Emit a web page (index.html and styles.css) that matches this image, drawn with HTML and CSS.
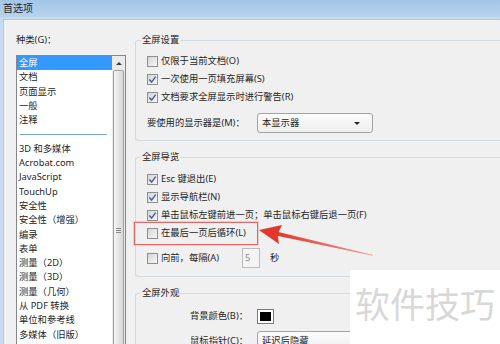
FILE: index.html
```html
<!DOCTYPE html>
<html lang="zh-CN">
<head>
  <meta charset="UTF-8">
  <title>首选项</title>
  <link rel="stylesheet" href="styles.css">
</head>
<body>
  <div class="window">
    <div class="titlebar">首选项</div>
    <div class="client">
      <div class="sidebar">
        <div class="sidebar-label">种类(G)：</div>
        <div class="listbox">
          <ul class="list">
            <li class="selected">全屏</li>
            <li>文档</li>
            <li>页面显示</li>
            <li>一般</li>
            <li>注释</li>
            <li class="sep"></li>
            <li>3D 和多媒体</li>
            <li>Acrobat.com</li>
            <li>JavaScript</li>
            <li>TouchUp</li>
            <li>安全性</li>
            <li>安全性（增强）</li>
            <li>编录</li>
            <li>表单</li>
            <li>测量（2D）</li>
            <li>测量（3D）</li>
            <li>测量（几何）</li>
            <li>从 PDF 转换</li>
            <li>单位和参考线</li>
            <li>多媒体（旧版）</li>
            <li>多媒体信任（旧版）</li>
          </ul>
          <div class="scrollbar">
            <div class="sb-up"><span class="tri"></span></div>
            <div class="thumb"><span class="grip"></span></div>
          </div>
        </div>
      </div>

      <div class="main">
        <fieldset class="group group-settings">
          <legend>全屏设置</legend>
          <div class="row"><span class="cb"></span>仅限于当前文档(O)</div>
          <div class="row"><span class="cb"><svg viewBox="0 0 9 9"><path d="M1.4 4.6 L3.6 7.1 L7.7 1.6"/></svg></span>一次使用一页填充屏幕(S)</div>
          <div class="row"><span class="cb"><svg viewBox="0 0 9 9"><path d="M1.4 4.6 L3.6 7.1 L7.7 1.6"/></svg></span>文档要求全屏显示时进行警告(R)</div>
          <div class="row row-field">
            <span class="field-label">要使用的显示器是(M)：</span>
            <div class="select">本显示器<span class="arrow"></span></div>
          </div>
        </fieldset>

        <fieldset class="group group-nav">
          <legend>全屏导览</legend>
          <div class="row"><span class="cb"><svg viewBox="0 0 9 9"><path d="M1.4 4.6 L3.6 7.1 L7.7 1.6"/></svg></span>Esc 键退出(E)</div>
          <div class="row"><span class="cb"><svg viewBox="0 0 9 9"><path d="M1.4 4.6 L3.6 7.1 L7.7 1.6"/></svg></span>显示导航栏(N)</div>
          <div class="row"><span class="cb"><svg viewBox="0 0 9 9"><path d="M1.4 4.6 L3.6 7.1 L7.7 1.6"/></svg></span>单击鼠标左键前进一页；单击鼠标右键后退一页(F)</div>
          <div class="row"><span class="cb"></span>在最后一页后循环(L)</div>
          <div class="row row-input">
            <span class="check-fixed"><span class="cb"></span>向前，每隔(A)</span>
            <span class="spin">5</span>
            <span class="unit">秒</span>
          </div>
        </fieldset>

        <fieldset class="group group-look">
          <legend>全屏外观</legend>
          <div class="row">
            <span class="field-label">背景颜色(B)：</span>
            <span class="swatch"><span></span></span>
          </div>
          <div class="row row-field">
            <span class="field-label">鼠标指针(C)：</span>
            <div class="select">延迟后隐藏<span class="arrow"></span></div>
          </div>
        </fieldset>
      </div>
    </div>

    <div class="highlight"></div>
    <svg class="pointer" viewBox="0 0 500 344">
      <defs>
        <linearGradient id="fade" x1="276" y1="234" x2="374" y2="255" gradientUnits="userSpaceOnUse">
          <stop offset="0" stop-color="#e3372c"/>
          <stop offset="1" stop-color="#e3372c" stop-opacity="0.45"/>
        </linearGradient>
      </defs>
      <polygon points="275.7,235.6 276.3,231.6 373.1,254.9 372.9,255.7" fill="url(#fade)"/>
      <polygon points="259,230 282,225 277.6,234.3 279,244" fill="#e3372c"/>
    </svg>
    <div class="watermark">软件技巧</div>
  </div>
</body>
</html>
```

FILE: styles.css
```css
* {
  box-sizing: border-box;
}
body {
  margin: 0;
  width: 500px;
  height: 344px;
  overflow: hidden;
  font-family: "Noto Sans", "Noto Sans CJK SC", sans-serif;
  font-size: 9.3px;
  line-height: 12px;
  color: #262626;
}
.window {
  position: relative;
  height: 344px;
  display: flex;
  flex-direction: column;
  background: #c6dbef;
  overflow: hidden;
}
.titlebar {
  flex: none;
  height: 17px;
  padding-left: 3px;
  line-height: 16px;
  font-size: 10px;
  background: linear-gradient(#a3c5e6, #b7d3ee);
}
.client {
  flex: 1;
  min-height: 0;
  display: flex;
  margin: 2px 0 0 3px;
  background: #f0f0f0;
  border-top: 1px solid #b4c8dc;
  border-left: 1px solid #b4c8dc;
}

/* left category list */
.sidebar {
  flex: none;
  width: 122px;
  padding: 14px 0 0 12px;
  display: flex;
  flex-direction: column;
}
.sidebar-label {
  height: 12px;
  margin-bottom: 9px;
}
.listbox {
  flex: none;
  height: 300px;
  display: flex;
  background: #fff;
  border: 1px solid #828790;
}
.list {
  flex: 1;
  list-style: none;
  margin: 0;
  padding: 0;
}
.list li {
  height: 14.3px;
  line-height: 14.3px;
  padding-left: 2px;
  white-space: nowrap;
}
.list li.selected {
  background: #3399ff;
  color: #fff;
}
.list li.sep {
  background: linear-gradient(#72a9c9, #72a9c9) no-repeat 3px 7px / 87px 1px;
}
.scrollbar {
  flex: none;
  width: 13px;
  display: flex;
  flex-direction: column;
  background: #eaeaea;
}
.sb-up {
  height: 14px;
  display: flex;
  align-items: center;
  justify-content: center;
}
.tri {
  border-left: 3px solid transparent;
  border-right: 3px solid transparent;
  border-bottom: 3px solid #3c3c3c;
}
.thumb {
  flex: 1;
  margin: 0 1px;
  display: flex;
  justify-content: center;
  border: 1px solid #a2a2a2;
  border-radius: 2px;
  background: linear-gradient(90deg, #f5f5f5, #e6e6e6 50%, #d8d8d8);
}
.grip {
  margin-top: 157px;
  width: 5px;
  height: 6px;
  background: repeating-linear-gradient(#8a8a8a 0 1px, transparent 1px 2px);
}

/* right option groups */
.main {
  flex: 1;
  min-width: 0;
  padding: 14px 0 0 9px;
}
.group {
  margin: 0 0 10px;
  min-width: 0;
  border: 1px solid #d3dbe2;
  border-right: none;
  border-radius: 3px 0 0 3px;
}
.group legend {
  padding: 0 1px;
  margin-left: -6px;
  line-height: 12px;
}
.group-settings {
  padding: 6px 0 7px 11px;
}
.group-nav {
  padding: 7px 0 8px 11px;
}
.group-look {
  padding: 8px 0 0 11px;
}
.row {
  display: flex;
  align-items: center;
  height: 18px;
  white-space: nowrap;
}
.row-field {
  height: 20px;
  margin-top: 6px;
}
.group-settings .row-field {
  margin-top: 7px;
}
.row-input {
  height: 20px;
  margin-top: 6px;
}
.cb {
  flex: none;
  width: 11px;
  height: 11px;
  margin-right: 3px;
  display: flex;
  align-items: center;
  justify-content: center;
  border: 1px solid #8e8f8f;
  background: linear-gradient(135deg, #d4d4d4, #f8f8f8);
}
.cb svg {
  width: 9px;
  height: 9px;
}
.cb path {
  fill: none;
  stroke: #4660a0;
  stroke-width: 1.5;
}
.field-label {
  flex: none;
  width: 101px;
  margin-right: 9px;
}
.group-look .field-label {
  text-align: right;
}
.select {
  flex: none;
  width: 116px;
  height: 20px;
  display: flex;
  align-items: center;
  justify-content: space-between;
  padding: 0 12px 0 4px;
  border: 1px solid #a3a3a3;
  border-radius: 3px;
  background: linear-gradient(#fcfcfc, #eeeeee);
}
.arrow {
  border-left: 3px solid transparent;
  border-right: 3px solid transparent;
  border-top: 3px solid #222;
}
.check-fixed {
  flex: none;
  width: 95px;
  display: flex;
  align-items: center;
}
.spin {
  flex: none;
  width: 18px;
  height: 20px;
  padding-left: 2px;
  line-height: 18px;
  color: #8a8a8a;
  border: 1px solid #bcbcbc;
  background: #f4f4f4;
}
.unit {
  margin-left: 10px;
}
.swatch {
  flex: none;
  width: 17px;
  height: 15px;
  padding: 2px;
  border: 1px solid #7a7a7a;
  background: #fff;
}
.swatch span {
  display: block;
  height: 100%;
  background: #000;
}

/* annotations over the dialog */
.highlight {
  position: absolute;
  left: 134px;
  top: 222px;
  width: 124px;
  height: 23px;
  border: 1px solid #e06a6a;
  box-shadow: 0 0 0 1px rgba(230, 120, 120, 0.3);
}
.pointer {
  position: absolute;
  left: 0;
  top: 0;
  width: 500px;
  height: 344px;
}
.watermark {
  position: absolute;
  left: 350px;
  top: 270px;
  width: 150px;
  height: 74px;
  padding: 13px 0 0 5px;
  background: #fff;
  font-family: "Noto Sans CJK SC", sans-serif;
  font-size: 35px;
  line-height: 40px;
  color: #d8d8d8;
  white-space: nowrap;
}
```
